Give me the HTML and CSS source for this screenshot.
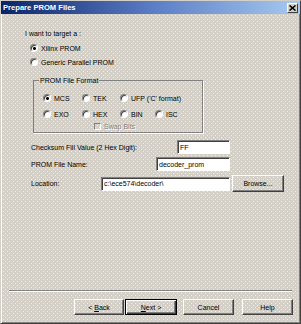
FILE: index.html
```html
<!DOCTYPE html>
<html>
<head>
  <meta charset="utf-8">
  <meta name="viewport" content="width=device-width">
  <title>Prepare PROM Files</title>

  <link rel="stylesheet" href="styles.css">

</head>
<body>
  <div class="dialog">

    <div class="titlebar">
      <span class="title">Prepare PROM Files</span>
      <span class="closeBtn">
        <svg width="7" height="6" viewBox="0 0 7 6"><path d="M0.5 0.5l6 5M6.5 0.5l-6 5" stroke="#000" stroke-width="1.6"/></svg>
      </span>
    </div>

    <div class="content">
      <div class="prompt">I want to target a :</div>
      <div class="option target"><span class="radio checked"></span>Xilinx PROM</div>
      <div class="option target"><span class="radio"></span>Generic Parallel PROM</div>

      <fieldset class="format">
        <legend>PROM File Format</legend>
        <div class="formatGrid">
          <div class="option"><span class="radio checked"></span>MCS</div>
          <div class="option"><span class="radio"></span>TEK</div>
          <div class="option wide"><span class="radio"></span>UFP ('C' format)</div>
          <div class="option"><span class="radio"></span>EXO</div>
          <div class="option"><span class="radio"></span>HEX</div>
          <div class="option"><span class="radio"></span>BIN</div>
          <div class="option"><span class="radio"></span>ISC</div>
        </div>
        <div class="option swap"><span class="checkbox"></span>Swap Bits</div>
      </fieldset>

      <div class="field checksum">
        <span class="label">Checksum Fill Value (2 Hex Digit):</span>
        <span class="input ffInput">FF</span>
      </div>
      <div class="field name">
        <span class="label">PROM File Name:</span>
        <span class="input nameInput">decoder_prom</span>
      </div>
      <div class="field location">
        <span class="label">Location:</span>
        <span class="input locationInput">c:\ece574\decoder\</span>
        <span class="btn browseBtn"><span>Browse...</span></span>
      </div>
    </div>

    <div class="footer">
      <div class="separator"></div>
      <div class="buttons">
        <span class="btn backBtn"><span>&lt; <u>B</u>ack</span></span>
        <span class="btn nextBtn"><span><u>N</u>ext &gt;</span></span>
        <span class="btn cancelBtn"><span>Cancel</span></span>
        <span class="btn helpBtn"><span>Help</span></span>
      </div>
    </div>

  </div>
</body>
</html>
```

FILE: styles.css
```css
    * {
      box-sizing: border-box;
    }

    body {
      margin: 0;
      font-family: "Liberation Sans", Arial, sans-serif;
      font-size: 7px;
      color: #000;
    }

    .dialog {
      width: 301px;
      height: 324px;
      display: flex;
      flex-direction: column;
      background-color: #d4d0c8;
      background-image:
        conic-gradient(from 270deg at 1px 1px, #f2f0e6 90deg, transparent 0),
        conic-gradient(from 270deg at 1px 1px, #f2f0e6 90deg, transparent 0);
      background-size: 4px 4px;
      background-position: 0 0, 2px 2px;
      border: 1px solid;
      border-color: #d4d0c8 #404040 #404040 #d4d0c8;
      box-shadow: inset 1px 1px 0 #fff, inset -1px -1px 0 #808080;
    }

    /* title bar */
    .titlebar {
      height: 13px;
      display: flex;
      align-items: center;
      padding: 0 2px;
      background: linear-gradient(90deg, #0a246a, #5a7cc4 50%, #a6caf0);
    }

    .title {
      color: #fff;
      font-weight: bold;
      font-size: 7.6px;
    }

    .closeBtn {
      margin-left: auto;
      width: 11px;
      height: 10px;
      display: flex;
      align-items: center;
      justify-content: center;
      background: #d4d0c8;
      border: 1px solid;
      border-color: #fff #404040 #404040 #fff;
    }

    /* body */
    .content {
      flex: 1;
      padding: 14px 0 0 24px;
    }

    .prompt {
      height: 11px;
      line-height: 11px;
    }

    .option {
      display: flex;
      align-items: center;
      height: 10px;
      white-space: nowrap;
    }

    .target {
      margin-top: 4px;
      padding-left: 5px;
    }

    .radio {
      flex: none;
      width: 8px;
      height: 8px;
      margin-right: 3px;
      border-radius: 50%;
      background: #fff;
      border: 1px solid;
      border-color: #808080 #fff #fff #808080;
      box-shadow: inset 1px 1px 0 #404040;
    }

    .radio.checked {
      background: radial-gradient(circle at 3.5px 3.5px, #000 1.2px, #fff 1.7px);
    }

    .checkbox {
      flex: none;
      width: 7px;
      height: 7px;
      margin-right: 3px;
      border: 1px solid;
      border-color: #808080 #fff #fff #808080;
    }

    /* format group */
    .format {
      margin: 9px 0 0 8px;
      width: 170px;
      min-width: 0;
      padding: 0 0 1px 9px;
      border: 1px solid #808080;
      box-shadow: 1px 1px 0 #fff;
    }

    .format legend {
      margin-left: -4px;
      padding: 0 1px;
      line-height: 9px;
    }

    .formatGrid {
      margin-top: 8px;
      display: grid;
      grid-template-columns: 39px 38px 35px auto;
      row-gap: 6px;
    }

    .formatGrid .wide {
      grid-column: span 2;
    }

    .swap {
      margin: 2px 0 0 51px;
      color: #808080;
      text-shadow: 1px 1px 0 #fff;
    }

    /* fields */
    .field {
      display: flex;
      align-items: center;
      margin-left: 6px;
      width: 199px;
      height: 14px;
    }

    .label {
      flex: 1;
      white-space: nowrap;
    }

    .input {
      height: 14px;
      display: flex;
      align-items: center;
      padding-left: 2px;
      background: #fff;
      border: 1px solid;
      border-color: #808080 #fff #fff #808080;
      box-shadow: inset 1px 1px 0 #404040;
      white-space: nowrap;
      overflow: hidden;
    }

    .checksum {
      margin-top: 7px;
    }

    .ffInput {
      width: 53px;
    }

    .name {
      margin-top: 3px;
    }

    .nameInput {
      width: 74px;
    }

    .location {
      margin-top: 4px;
      width: 253px;
      height: 17px;
    }

    .locationInput {
      width: 129px;
    }

    /* buttons */
    .btn {
      height: 16px;
      display: flex;
      align-items: center;
      justify-content: center;
      white-space: pre;
      border: 1px solid;
      border-color: #fff #404040 #404040 #fff;
      box-shadow: inset -1px -1px 0 #808080;
    }

    .browseBtn {
      margin-left: 2px;
      width: 52px;
      height: 17px;
    }

    .footer {
      padding-bottom: 8px;
    }

    .separator {
      margin: 0 8px;
      border-top: 1px solid #808080;
      border-bottom: 1px solid #fff;
    }

    .buttons {
      margin-top: 7px;
      display: flex;
      justify-content: flex-end;
      padding-right: 7px;
    }

    .backBtn {
      width: 50px;
      margin-right: 1px;
    }

    .nextBtn {
      width: 52px;
      margin-right: 6px;
      border-color: #000;
      box-shadow: inset 1px 1px 0 #fff, inset -1px -1px 0 #404040, inset -2px -2px 0 #808080;
    }

    .cancelBtn {
      width: 51px;
      margin-right: 8px;
    }

    .helpBtn {
      width: 51px;
    }
```
